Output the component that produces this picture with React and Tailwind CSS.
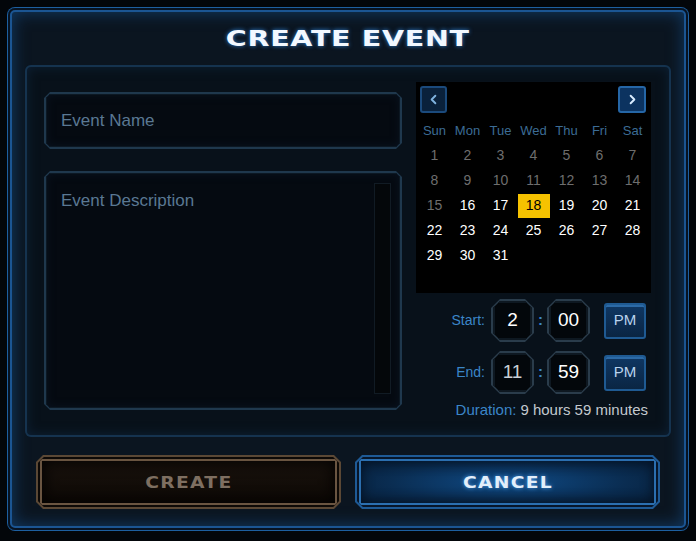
import { ChevronLeft, ChevronRight } from "lucide-react";

const oct6 =
  "[clip-path:polygon(6px_0,calc(100%_-_6px)_0,100%_6px,100%_calc(100%_-_6px),calc(100%_-_6px)_100%,6px_100%,0_calc(100%_-_6px),0_6px)]";
const oct4 =
  "[clip-path:polygon(4px_0,calc(100%_-_4px)_0,100%_4px,100%_calc(100%_-_4px),calc(100%_-_4px)_100%,4px_100%,0_calc(100%_-_4px),0_4px)]";
const oct9 =
  "[clip-path:polygon(9px_0,calc(100%_-_9px)_0,100%_9px,100%_calc(100%_-_9px),calc(100%_-_9px)_100%,9px_100%,0_calc(100%_-_9px),0_9px)]";
const oct7 =
  "[clip-path:polygon(7px_0,calc(100%_-_7px)_0,100%_7px,100%_calc(100%_-_7px),calc(100%_-_7px)_100%,7px_100%,0_calc(100%_-_7px),0_7px)]";

const DAYS = ["Sun", "Mon", "Tue", "Wed", "Thu", "Fri", "Sat"];
const WEEKS = [
  [1, 2, 3, 4, 5, 6, 7],
  [8, 9, 10, 11, 12, 13, 14],
  [15, 16, 17, 18, 19, 20, 21],
  [22, 23, 24, 25, 26, 27, 28],
  [29, 30, 31, null, null, null, null],
];

function Field({ className = "", children }) {
  return (
    <div className={`bg-[#1f384d] p-[2px] ${oct6} ${className}`}>
      <div
        className={`h-full bg-[#050a11] shadow-[inset_0_0_0_1px_#0c1823,inset_0_0_10px_#0a1522] ${oct4}`}
      >
        {children}
      </div>
    </div>
  );
}

function TimeBox({ value, dim }) {
  return (
    <div className={`w-[43px] h-[43px] bg-[#2a3c4b] p-[2px] ${oct9}`}>
      <div
        className={`h-full flex items-center justify-center bg-[#03070b] shadow-[inset_0_0_0_2px_#0e1821] ${oct7} ${
          dim ? "text-[#c9d0d6]" : "text-white"
        } text-[19px]`}
      >
        {value}
      </div>
    </div>
  );
}

function TimeRow({ label, hour, minute, dimHour }) {
  return (
    <div className="flex items-center justify-end pr-[5px]">
      <span className="text-[14px] text-[#3b86c8] mr-[6px]">{label}</span>
      <TimeBox value={hour} dim={dimHour} />
      <span className="w-[13px] text-center text-[15px] text-[#3b86c8] font-bold">:</span>
      <TimeBox value={minute} />
      <div className="ml-[14px] w-[42px] h-[36px] rounded-[3px] border-2 border-[#1f5a92] bg-gradient-to-b from-[#0f3763] to-[#0a2543] shadow-[inset_0_2px_0_#2c6aa6] flex items-center justify-center text-[15px] text-[#b9d3ee]">
        PM
      </div>
    </div>
  );
}

export default function App() {
  return (
    <div
      className="w-[696px] h-[541px] bg-[#03060a] px-[8px] pt-[8px] pb-[11px] overflow-hidden"
      style={{ fontFamily: '"Liberation Sans", Arial, sans-serif' }}
    >
      <div className="h-full flex flex-col px-[17px] rounded-[7px] bg-[#0b1520] shadow-[0_0_0_1px_#1d5fa0,inset_0_0_0_2px_#071322,inset_0_0_0_4px_#1b5592,inset_0_0_16px_5px_#113860]">
        <div className="h-[57px] pt-[4px] flex items-center justify-center">
          <h1
            className="text-[22px] font-bold text-[#f2f8ff] tracking-[0.5px] scale-x-[1.3] [text-shadow:0_0_4px_#2f7fd0]"
            style={{ fontFamily: '"DejaVu Sans", sans-serif' }}
          >
            CREATE EVENT
          </h1>
        </div>

        <div className="h-[372px] flex gap-[14px] pl-[19px] pr-[20px] rounded-[6px] bg-[#08111a] shadow-[inset_0_0_0_2px_#15334f,inset_0_0_12px_2px_#0d2136]">
          <div className="w-[358px] pt-[27px] flex flex-col gap-[22px]">
            <Field className="h-[57px]">
              <div className="h-full flex items-center pl-[15px] pt-[1px] text-[17px] text-[#5a7893]">
                Event Name
              </div>
            </Field>
            <Field className="h-[239px]">
              <div className="relative h-full pl-[15px] pt-[15px] text-[17px] text-[#5a7893]">
                Event Description
                <div className="absolute right-[9px] top-[10px] bottom-[14px] w-[17px] border border-[#111b24] bg-[#04070a]" />
              </div>
            </Field>
          </div>

          <div className="w-[235px] pt-[17px] flex flex-col">
            <div className="h-[211px] bg-black px-[2px] pt-[4px]">
              <div className="flex justify-between px-[2px] mb-[5px]">
                <div className="w-[27px] h-[27px] rounded-[3px] border-2 border-[#1b4a7c] bg-[#0a213b] flex items-center justify-center text-[#7fb2de]">
                  <ChevronLeft size={15} strokeWidth={3} />
                </div>
                <div className="w-[28px] h-[27px] rounded-[3px] border-2 border-[#2566a6] bg-[#0c3360] flex items-center justify-center text-[#d8ecff] mr-[1px]">
                  <ChevronRight size={15} strokeWidth={3} />
                </div>
              </div>
              <div className="grid grid-cols-[repeat(7,33px)]">
                {DAYS.map((d) => (
                  <div key={d} className="h-[25px] flex items-center justify-center text-[13px] text-[#3c6c95]">
                    {d}
                  </div>
                ))}
                {WEEKS.flat().map((n, i) => (
                  <div key={i} className="h-[25px] flex items-center justify-center text-[14px]">
                    {n === 18 ? (
                      <span className="w-[32px] h-[24px] bg-[#f6c200] text-black flex items-center justify-center">
                        18
                      </span>
                    ) : n ? (
                      <span className={n <= 15 ? "text-[#6e6e6e]" : "text-white"}>{n}</span>
                    ) : null}
                  </div>
                ))}
              </div>
            </div>

            <div className="mt-[6px] flex flex-col gap-[9px]">
              <TimeRow label="Start:" hour="2" minute="00" />
              <TimeRow label="End:" hour="11" minute="59" dimHour />
            </div>
            <div className="mt-[5px] pr-[3px] flex justify-end text-[15px]">
              <span className="text-[#3b86c8]">Duration:</span>
              <span className="ml-[4px] text-[#c3c9cf]">9 hours 59 minutes</span>
            </div>
          </div>
        </div>

        <div className="mt-[18px] px-[11px] flex gap-[14px]">
          <div className={`flex-1 h-[54px] bg-[#5b4835] p-[2px] ${oct7}`}>
            <div
              className={`h-full pt-[3px] bg-gradient-to-b from-[#1a130e] to-[#0c0805] shadow-[inset_0_0_0_2px_#0d0906,inset_0_0_0_4px_#6a5541,inset_0_0_14px_6px_#050302] flex items-center justify-center ${oct6}`}
            >
              <span
                className="text-[15px] font-bold tracking-[1px] scale-x-[1.25] text-[#7e6f61]"
                style={{ fontFamily: '"DejaVu Sans", sans-serif' }}
              >
                CREATE
              </span>
            </div>
          </div>
          <div className={`flex-1 h-[54px] bg-[#1e5a96] p-[2px] ${oct7}`}>
            <div
              className={`h-full pt-[3px] bg-[radial-gradient(ellipse_at_center,#0f4a85_0%,#0a2d52_55%,#061a31_100%)] shadow-[inset_0_0_0_2px_#07162a,inset_0_0_0_4px_#2b6fb0,inset_0_0_12px_5px_#041224] flex items-center justify-center ${oct6}`}
            >
              <span
                className="text-[15px] font-bold tracking-[1px] scale-x-[1.25] text-[#e2eefa] [text-shadow:0_0_4px_#4a9ae6]"
                style={{ fontFamily: '"DejaVu Sans", sans-serif' }}
              >
                CANCEL
              </span>
            </div>
          </div>
        </div>
      </div>
    </div>
  );
}
